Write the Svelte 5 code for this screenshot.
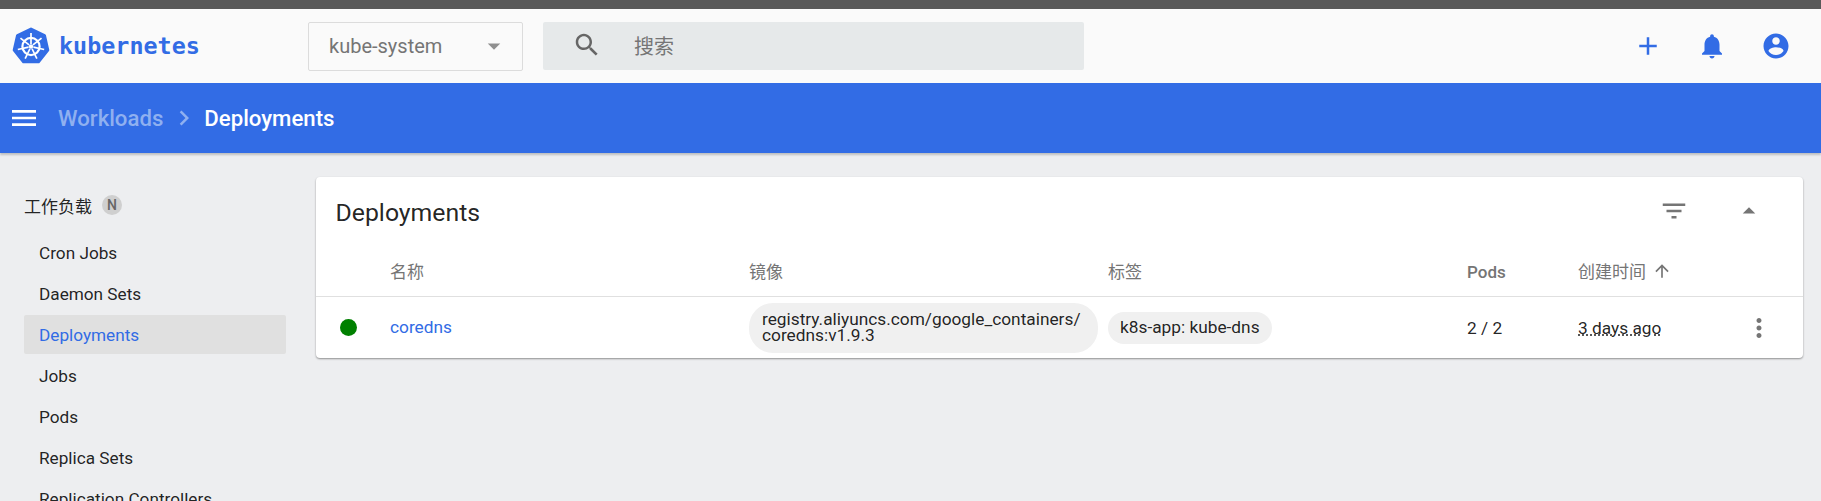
<script>
  const sideItems = ['Cron Jobs', 'Daemon Sets', 'Deployments', 'Jobs', 'Pods', 'Replica Sets', 'Replication Controllers'];
  const spokes = [0, 51.43, 102.86, 154.29, 205.71, 257.14, 308.57];
</script>

{#snippet icon(d, size = 30)}
  <svg width={size} height={size} viewBox="0 0 24 24" fill="currentColor"><path {d} /></svg>
{/snippet}

<div class="page">
  <div class="strip"></div>

  <header class="toolbar">
    <div class="logo">
      <svg width="38" height="38" viewBox="0 0 38 38">
        <path d="M19 2 L32.5 8.5 L35.8 23 L26.5 34.8 L11.5 34.8 L2.2 23 L5.5 8.5 Z" fill="#326ce5" stroke="#326ce5" stroke-width="3" stroke-linejoin="round" />
        <g stroke="#fff" fill="none">
          <circle cx="19" cy="19.5" r="8.6" stroke-width="2.2" />
          {#each spokes as a}
            <line x1="19" y1="17" x2="19" y2="6" stroke-width="1.7" transform="rotate({a} 19 19.5)" />
          {/each}
        </g>
        <circle cx="19" cy="19.5" r="2.2" fill="#fff" />
      </svg>
      <span class="wordmark">kubernetes</span>
    </div>
    <div class="select">
      <span>kube-system</span>
      <span class="caret">{@render icon('M7 10l5 5 5-5z')}</span>
    </div>
    <div class="search">
      <span class="search-icon">{@render icon('M15.5 14h-.79l-.28-.27C15.41 12.59 16 11.11 16 9.5 16 5.91 13.09 3 9.5 3S3 5.91 3 9.5 5.91 16 9.5 16c1.61 0 3.09-.59 4.23-1.57l.27.28v.79l5 4.99L20.49 19l-4.99-5zm-6 0C7.01 14 5 11.99 5 9.5S7.01 5 9.5 5 14 7.01 14 9.5 11.99 14 9.5 14z')}</span>
      <span class="placeholder">搜索</span>
    </div>
    <div class="actions">
      {@render icon('M19 13h-6v6h-2v-6H5v-2h6V5h2v6h6v2z')}
      {@render icon('M12 22c1.1 0 2-.9 2-2h-4c0 1.1.89 2 2 2zm6-6v-5c0-3.07-1.64-5.64-4.5-6.32V4c0-.83-.67-1.5-1.5-1.5s-1.5.67-1.5 1.5v.68C7.63 5.36 6 7.92 6 11v5l-2 2v1h16v-1l-2-2z')}
      {@render icon('M12 2C6.48 2 2 6.48 2 12s4.48 10 10 10 10-4.48 10-10S17.52 2 12 2zm0 3c1.66 0 3 1.34 3 3s-1.34 3-3 3-3-1.34-3-3 1.34-3 3-3zm0 14.2c-2.5 0-4.71-1.28-6-3.22.03-1.99 4-3.08 6-3.08 1.99 0 5.97 1.09 6 3.08-1.29 1.94-3.5 3.22-6 3.22z')}
    </div>
  </header>

  <div class="crumbs">
    <span class="menu">{@render icon('M3 18h18v-2H3v2zm0-5h18v-2H3v2zm0-7v2h18V6H3z', 32)}</span>
    <span class="parent">Workloads</span>
    <span class="chevron">{@render icon('M10 6L8.59 7.41 13.17 12l-4.58 4.59L10 18l6-6z')}</span>
    <span class="current">Deployments</span>
  </div>

  <div class="body">
    <nav class="sidebar">
      <div class="side-title">工作负载 <span class="badge">N</span></div>
      {#each sideItems as item}
        <div class="side-item" class:active={item === 'Deployments'}>{item}</div>
      {/each}
    </nav>

    <main class="card">
      <div class="card-head">
        <span class="card-title">Deployments</span>
        <span class="filter">{@render icon('M10 18h4v-2h-4v2zM3 6v2h18V6H3zm3 7h12v-2H6v2z')}</span>
        <span class="collapse">{@render icon('M7 14l5-5 5 5z')}</span>
      </div>
      <div class="row head">
        <span></span>
        <span>名称</span>
        <span>镜像</span>
        <span>标签</span>
        <span class="pods">Pods</span>
        <span class="created">创建时间 {@render icon('M4 12l1.41 1.41L11 7.83V20h2V7.83l5.58 5.59L20 12l-8-8-8 8z', 20)}</span>
        <span></span>
      </div>
      <div class="row data">
        <span class="dot"></span>
        <span class="link">coredns</span>
        <span class="chip image">registry.aliyuncs.com/google_containers/<br />coredns:v1.9.3</span>
        <span class="chip label">k8s-app: kube-dns</span>
        <span>2 / 2</span>
        <span class="age">3 days ago</span>
        <span class="more">{@render icon('M12 8c1.1 0 2-.9 2-2s-.9-2-2-2-2 .9-2 2 .9 2 2 2zm0 2c-1.1 0-2 .9-2 2s.9 2 2 2 2-.9 2-2-.9-2-2-2zm0 6c-1.1 0-2 .9-2 2s.9 2 2 2 2-.9 2-2-.9-2-2-2z')}</span>
      </div>
    </main>
  </div>
</div>

<style>
  :global(body) {
    margin: 0;
    overflow: hidden;
  }

  svg {
    display: block;
    flex: none;
  }

  .page {
    height: 501px;
    overflow: hidden;
    display: flex;
    flex-direction: column;
    background: #edeef0;
    font-family: Roboto, "Noto Sans CJK SC", sans-serif;
    color: rgba(0, 0, 0, 0.87);
  }

  .strip {
    height: 9px;
    flex: none;
    background: #595959;
  }

  .toolbar {
    height: 74px;
    flex: none;
    display: flex;
    align-items: center;
    background: #fafafa;
  }

  .logo {
    width: 308px;
    display: flex;
    align-items: center;
    padding-left: 12px;
    box-sizing: border-box;
  }

  .wordmark {
    margin-left: 9px;
    font-family: "DejaVu Sans Mono", monospace;
    font-size: 23.4px;
    font-weight: 700;
    color: #326ce5;
  }

  .select {
    width: 215px;
    height: 49px;
    box-sizing: border-box;
    display: flex;
    align-items: center;
    justify-content: space-between;
    padding: 0 13px 0 20px;
    background: #fafafa;
    border: 1px solid #dcdcdc;
    border-radius: 2px;
    font-size: 20px;
    color: #757575;
  }

  .caret {
    color: #8f8f8f;
  }

  .search {
    width: 541px;
    height: 48px;
    margin-left: 20px;
    box-sizing: border-box;
    display: flex;
    align-items: center;
    padding-left: 29px;
    background: #e6e9ea;
    border-radius: 2px;
    font-size: 20px;
    color: #757575;
  }

  .search-icon {
    margin-right: 32px;
    margin-top: -2px;
    color: #666;
  }

  .placeholder {
    margin-top: -1px;
  }

  .actions {
    margin-left: auto;
    margin-right: 30px;
    display: flex;
    gap: 34px;
    color: #326ce5;
  }

  .crumbs {
    height: 70px;
    flex: none;
    display: flex;
    align-items: center;
    padding-left: 8px;
    background: #326ce5;
    box-shadow: 0 2px 2px rgba(0, 0, 0, 0.2);
    font-size: 22.2px;
    font-weight: 500;
    color: #fff;
    position: relative;
  }

  .parent {
    margin-left: 18px;
    color: #8fb0f0;
  }

  .chevron {
    margin: 0 5.5px;
    color: #8fb0f0;
  }

  .body {
    flex: 1;
    display: flex;
    align-items: flex-start;
  }

  .sidebar {
    width: 316px;
    flex: none;
    box-sizing: border-box;
    padding: 37px 30px 0 24px;
    font-size: 17.2px;
  }

  .side-title {
    height: 30px;
    margin-bottom: 13px;
    display: flex;
    align-items: center;
    gap: 10px;
    font-size: 17px;
  }

  .badge {
    width: 20px;
    height: 20px;
    border-radius: 50%;
    display: flex;
    align-items: center;
    justify-content: center;
    background: #cfcfcf;
    color: #666;
    font-size: 14px;
    font-weight: 500;
  }

  .side-item {
    height: 39px;
    margin-bottom: 2px;
    display: flex;
    align-items: center;
    padding-left: 15px;
    border-radius: 2px;
  }

  .side-item.active {
    background: #e0e0e0;
    color: #326ce5;
  }

  .card {
    width: 1487px;
    margin-top: 24px;
    background: #fff;
    border-radius: 4px;
    box-shadow: 0 1px 2px rgba(0, 0, 0, 0.4);
    font-size: 17.3px;
  }

  .card-head {
    height: 68px;
    display: flex;
    align-items: center;
    padding-left: 19.5px;
  }

  .card-title {
    font-size: 24.8px;
    margin-top: 2px;
    margin-right: auto;
  }

  .filter {
    margin-right: 45px;
    color: #757575;
  }

  .collapse {
    margin-right: 39px;
    color: #757575;
  }

  .row {
    display: grid;
    grid-template-columns: 74px 359px 359px 359px 111px 1fr 60px;
    align-items: center;
  }

  .row.head {
    height: 51px;
    border-bottom: 1px solid #e0e0e0;
    font-size: 17px;
    color: #757575;
  }

  .pods {
    font-weight: 500;
    padding-top: 2px;
  }

  .created {
    display: flex;
    align-items: center;
    gap: 6px;
  }

  .row.data {
    height: 61px;
  }

  .dot {
    width: 17px;
    height: 17px;
    margin-left: 24px;
    border-radius: 50%;
    background: #008000;
  }

  .link {
    color: #326ce5;
    margin-top: -1px;
  }

  .chip {
    justify-self: start;
    box-sizing: border-box;
    background: #f0f0f0;
  }

  .image {
    width: 349px;
    height: 50px;
    padding: 8px 13px;
    border-radius: 24px;
    line-height: 16.5px;
  }

  .label {
    height: 32px;
    line-height: 31px;
    padding: 0 12px;
    border-radius: 16px;
  }

  .age {
    text-decoration: underline dotted;
  }

  .more {
    color: #757575;
    margin-left: 1px;
  }
</style>
